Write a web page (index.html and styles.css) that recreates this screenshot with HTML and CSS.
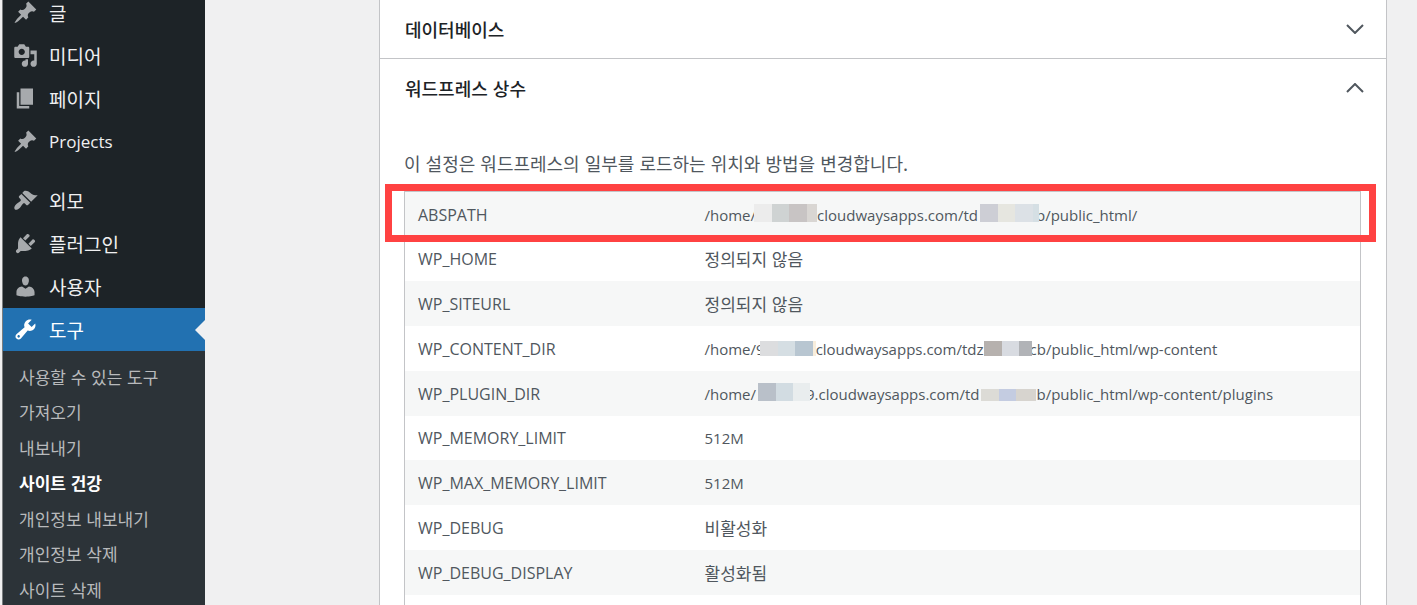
FILE: index.html
```html
<!DOCTYPE html>
<html lang="ko">
<head>
  <meta charset="utf-8">
  <title>사이트 건강</title>
  <link rel="stylesheet" href="styles.css">
</head>
<body>
  <!-- Admin menu -->
  <nav class="sidebar">
    <ul class="menu">
      <li><a href="#"><svg class="icon" viewBox="0 0 20 20"><path d="M10.44 3.02l1.82-1.82 6.36 6.35-1.83 1.82c-1.05-.68-2.48-.57-3.41.36l-.75.75c-.92.93-1.04 2.35-.35 3.41l-1.83 1.82-2.41-2.41-2.8 2.79c-.42.42-3.38 2.71-3.8 2.29s1.86-3.39 2.28-3.81l2.79-2.79L4.1 9.36l1.83-1.82c1.05.69 2.48.57 3.4-.36l.75-.75c.93-.92 1.05-2.35.36-3.41z"/></svg>글</a></li>
      <li><a href="#"><svg class="icon" viewBox="0 0 20 20"><path d="M13 11V4c0-.55-.45-1-1-1h-1.67L9 1H5L3.67 3H2c-.55 0-1 .45-1 1v7c0 .55.45 1 1 1h10c.55 0 1-.45 1-1zM7 4.5c1.38 0 2.5 1.12 2.5 2.5S8.38 9.5 7 9.5 4.5 8.38 4.5 7 5.62 4.5 7 4.5zM14 6h5v10.5c0 1.38-1.12 2.5-2.5 2.5S14 17.88 14 16.5s1.12-2.5 2.5-2.5c.17 0 .34.02.5.05V9h-3V6zm-4 8.05V13h2v3.5c0 1.38-1.12 2.5-2.5 2.5S7 17.88 7 16.5 8.12 14 9.5 14c.17 0 .34.02.5.05z"/></svg>미디어</a></li>
      <li><a href="#"><svg class="icon" viewBox="0 0 20 20"><path d="M6 15V2h10v13H6zm-1 1h8v2H3V5h2v11z"/></svg>페이지</a></li>
      <li><a href="#"><svg class="icon" viewBox="0 0 20 20"><path d="M10.44 3.02l1.82-1.82 6.36 6.35-1.83 1.82c-1.05-.68-2.48-.57-3.41.36l-.75.75c-.92.93-1.04 2.35-.35 3.41l-1.83 1.82-2.41-2.41-2.8 2.79c-.42.42-3.38 2.71-3.8 2.29s1.86-3.39 2.28-3.81l2.79-2.79L4.1 9.36l1.83-1.82c1.05.69 2.48.57 3.4-.36l.75-.75c.93-.92 1.05-2.35.36-3.41z"/></svg><span class="latin">Projects</span></a></li>
    </ul>
    <ul class="menu">
      <li><a href="#"><svg class="icon" viewBox="0 0 20 20"><path d="M14.48 11.06L7.41 3.99l1.5-1.5c.5-.56 2.3-.47 3.51.32 1.21.8 1.43 1.28 2.91 2.1 1.18.64 2.45 1.26 4.45.85zm-.71.71L6.7 4.7 4.93 6.47c-.39.39-.39 1.02 0 1.41l1.06 1.06c.39.39.39 1.03 0 1.42-.6.6-1.43 1.11-2.21 1.69-.35.26-.7.53-1.01.84C1.43 14.23.4 16.08 1.4 17.07c.99 1 2.84-.03 4.18-1.36.31-.31.58-.66.85-1.02.57-.78 1.08-1.61 1.69-2.21.39-.39 1.02-.39 1.41 0l1.06 1.06c.39.39 1.02.39 1.41 0z"/></svg>외모</a></li>
      <li><a href="#"><svg class="icon" viewBox="0 0 20 20"><path d="M13.11 4.36L9.87 7.6 8 5.73l3.24-3.24c.35-.34 1.05-.2 1.56.32.52.51.66 1.21.31 1.55zm-8 1.77l.91-1.12 9.01 9.01-1.19.84c-.71.71-2.63 1.16-3.82 1.16H6.14L4.9 17.26c-.59.59-1.54.59-2.12 0-.59-.58-.59-1.53 0-2.12l1.24-1.24v-3.88c0-1.13.4-3.19 1.09-3.89zm7.26 3.97l3.24-3.24c.34-.35 1.04-.21 1.55.31.52.51.66 1.21.31 1.55l-3.24 3.25z"/></svg>플러그인</a></li>
      <li><a href="#"><svg class="icon" viewBox="0 0 20 20"><path d="M10 9.25c-2.27 0-2.73-3.44-2.73-3.44C7 4.02 7.82 2 9.97 2c2.16 0 2.98 2.02 2.71 3.81 0 0-.41 3.44-2.68 3.44zm0 2.57L12.72 10c2.39 0 4.52 2.33 4.52 4.53v2.49s-3.65 1.13-7.24 1.13c-3.65 0-7.24-1.13-7.24-1.13v-2.49c0-2.25 1.94-4.48 4.47-4.48z"/></svg>사용자</a></li>
      <li><a href="#" class="current"><svg class="icon" viewBox="0 0 20 20"><path d="M16.68 9.77c-1.34 1.34-3.3 1.67-4.95.99l-5.41 6.52c-.99.99-2.59.99-3.58 0s-.99-2.59 0-3.57l6.52-5.42c-.68-1.65-.35-3.61.99-4.95 1.28-1.28 3.12-1.62 4.72-1.06l-2.89 2.89 2.82 2.82 2.86-2.87c.53 1.58.18 3.39-1.08 4.65zM3.81 16.21c.4.39 1.04.39 1.43 0 .4-.4.4-1.04 0-1.43-.39-.4-1.03-.4-1.43 0-.39.39-.39 1.03 0 1.43z"/></svg>도구</a></li>
    </ul>
    <ul class="submenu">
      <li><a href="#">사용할 수 있는 도구</a></li>
      <li><a href="#">가져오기</a></li>
      <li><a href="#">내보내기</a></li>
      <li><a href="#" class="current">사이트 건강</a></li>
      <li><a href="#">개인정보 내보내기</a></li>
      <li><a href="#">개인정보 삭제</a></li>
      <li><a href="#">사이트 삭제</a></li>
    </ul>
  </nav>

  <!-- Site health info -->
  <main class="content">
    <div class="accordion">
      <h3 class="heading">
        <button type="button" aria-expanded="false">데이터베이스
          <svg class="chevron" viewBox="0 0 18 10"><path d="M1 1l8 8 8-8"/></svg>
        </button>
      </h3>
      <h3 class="heading">
        <button type="button" aria-expanded="true">워드프레스 상수
          <svg class="chevron" viewBox="0 0 18 10"><path d="M1 9l8-8 8 8"/></svg>
        </button>
      </h3>
      <div class="panel">
        <p>이 설정은 워드프레스의 일부를 로드하는 위치와 방법을 변경합니다.</p>
        <div class="table-wrap">
          <table>
            <tbody>
              <tr><th scope="row">ABSPATH</th><td class="latin">/home/<span class="mask mask-host-1"></span>cloudwaysapps.com/td<span class="mask mask-app-1"></span>b/public_html/</td></tr>
              <tr><th scope="row">WP_HOME</th><td>정의되지 않음</td></tr>
              <tr><th scope="row">WP_SITEURL</th><td>정의되지 않음</td></tr>
              <tr><th scope="row">WP_CONTENT_DIR</th><td class="latin">/home/9<span class="mask mask-host-2"></span>cloudwaysapps.com/tdz<span class="mask mask-app-2"></span>cb/public_html/wp-content</td></tr>
              <tr><th scope="row">WP_PLUGIN_DIR</th><td class="latin">/home/<span class="mask mask-host-3"></span>9.cloudwaysapps.com/td<span class="mask mask-app-3"></span>b/public_html/wp-content/plugins</td></tr>
              <tr><th scope="row">WP_MEMORY_LIMIT</th><td class="latin">512M</td></tr>
              <tr><th scope="row">WP_MAX_MEMORY_LIMIT</th><td class="latin">512M</td></tr>
              <tr><th scope="row">WP_DEBUG</th><td>비활성화</td></tr>
              <tr><th scope="row">WP_DEBUG_DISPLAY</th><td>활성화됨</td></tr>
              <tr><th scope="row"></th><td></td></tr>
            </tbody>
          </table>
          <div class="highlight"></div>
        </div>
      </div>
    </div>
  </main>
</body>
</html>
```

FILE: styles.css
```css
* {
  box-sizing: border-box;
}

body {
  margin: 0;
  height: 100vh;
  padding-left: 2px;
  display: flex;
  overflow: hidden;
  background: #f0f0f1;
  color: #50575e;
  font-family: "Noto Sans CJK KR", sans-serif;
  font-size: 17px;
}

a {
  color: inherit;
  text-decoration: none;
}

.latin, th {
  font-family: "Open Sans", "Noto Sans CJK KR", sans-serif;
}

.latin {
  font-size: 15px;
}

/* sidebar */
.sidebar {
  flex: 0 0 203px;
  border-left: 1px solid #7b7e80;
  background: #1d2327;
}

.menu, .submenu {
  list-style: none;
  margin: 0;
  padding: 0;
  display: grid;
}

.menu {
  grid-auto-rows: 43px;
  margin-top: -9px;
}

.menu + .menu {
  margin-top: 16px;
}

.menu a {
  position: relative;
  height: 100%;
  padding-left: 10px;
  display: flex;
  align-items: center;
  gap: 11px;
  color: #f0f0f1;
  font-size: 19px;
}

.menu .latin {
  font-size: 17px;
}

.menu .current {
  background: #2271b1;
  color: #fff;
}

.menu .current::after {
  content: '';
  position: absolute;
  right: 0;
  border: 10px solid transparent;
  border-right-color: #f0f0f1;
  border-left: 0;
}

.icon {
  width: 25px;
  height: 25px;
  fill: #a7aaad;
}

.current .icon {
  fill: #fff;
}

.submenu {
  grid-auto-rows: 35px 36px;
  padding: 8px 0 8px 16px;
  background: #2c3338;
  color: #b8babc;
  line-height: 35px;
}

.submenu .current {
  color: #fff;
  font-weight: 700;
}

/* accordion */
.content {
  flex: 1;
  padding: 0 30px 0 174px;
}

.accordion {
  background: #fff;
  border: 1px solid #c3c4c7;
  border-top: 0;
}

.heading {
  margin: 0;
}

.heading + .heading {
  border-top: 1px solid #c3c4c7;
}

.heading button {
  width: 100%;
  height: 58px;
  padding: 0 22px 0 25px;
  display: flex;
  align-items: center;
  justify-content: space-between;
  border: 0;
  background: none;
  color: #1d2327;
  font-family: inherit;
  font-size: 18px;
  font-weight: 500;
  cursor: pointer;
}

.chevron {
  width: 18px;
  height: 10px;
  fill: none;
  stroke: #50575e;
  stroke-width: 2;
}

.panel {
  padding: 32px 25px 25px 24px;
}

.panel p {
  margin: 0;
  font-size: 18px;
  line-height: 28px;
}

.table-wrap {
  position: relative;
  margin-top: 14px;
}

table {
  width: 100%;
  border: 1px solid #c3c4c7;
  border-spacing: 0;
  table-layout: fixed;
}

tr {
  height: 45px;
}

tr:nth-child(4n+2) {
  height: 44px;
}

tr:nth-child(odd) {
  background: #f6f7f7;
}

th, td {
  padding: 0 13px;
  text-align: left;
  font-weight: 400;
  line-height: 24px;
  white-space: nowrap;
}

th {
  width: 30%;
  font-size: 16px;
}

/* pixelated parts of the paths, they cover a bit of the letters beside them */
.mask {
  position: relative;
  display: inline-block;
  height: 18px;
  vertical-align: -1px;
}

.mask-host-1 {
  width: 63px;
  margin-left: -2px;
  background: linear-gradient(90deg, #ececec 18px, #cfd3d3 18px 35px, #c8c4c4 35px 53px, #d9d6d3 53px);
}

.mask-app-1 {
  width: 59px;
  margin: 0 -3px 0 2px;
  background: linear-gradient(90deg, #cdced5 18px, #e6e6e0 18px 35px, #dce1e6 35px 53px, #d5dfe4 53px);
}

.mask-host-2 {
  width: 56px;
  height: 15px;
  margin-left: -5px;
  background: linear-gradient(90deg, #dcdddf 18px, #d5dee3 18px 35px, #b8c6d1 35px 53px, #f8eedd 53px);
}

.mask-app-2 {
  width: 48px;
  height: 15px;
  margin-right: -2px;
  background: linear-gradient(90deg, #b6b1ae 18px, #d8dbe1 18px 35px, #b1b3b7 35px);
}

.mask-host-3 {
  width: 52px;
  margin: 0 -4px 0 2px;
  background: linear-gradient(90deg, #b9c0c9 18px, #d2dce2 18px 35px, #e9edee 35px);
}

.mask-app-3 {
  width: 55px;
  height: 12px;
  margin-left: 2px;
  background: linear-gradient(90deg, #dcdbd6 18px, #c4cce1 18px 35px, #d7d4cf 35px);
}

/* red frame round the ABSPATH row */
.highlight {
  position: absolute;
  top: -7px;
  left: -19px;
  right: -15px;
  height: 58px;
  border: 7px solid #ff4242;
  pointer-events: none;
}
```
